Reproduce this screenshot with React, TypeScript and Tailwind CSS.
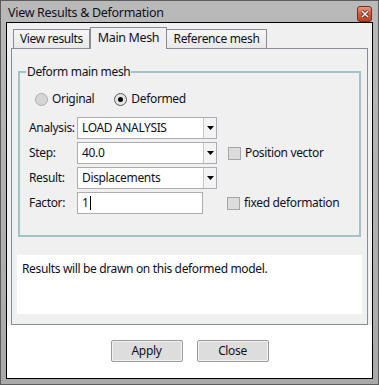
import React from "react";

function Radio({ checked, label }: { checked?: boolean; label: string }) {
  return (
    <label className="flex items-center gap-[4px]">
      <span
        className={`flex h-[13px] w-[13px] items-center justify-center rounded-full border ${
          checked
            ? "border-[#5a5a5a] bg-[#e4e4e4]"
            : "border-[#adadad] bg-[#d5d5d5]"
        }`}
      >
        {checked && <span className="h-[5px] w-[5px] rounded-full bg-black" />}
      </span>
      <span>{label}</span>
    </label>
  );
}

function Combo({ value }: { value: string }) {
  return (
    <div className="flex h-[22px] w-[140px] border border-[#abadb3] bg-white">
      <div className="flex flex-1 items-center pl-[4px]">{value}</div>
      <div className="flex w-[13px] items-center justify-center border-l border-[#c7c7c7] bg-[#f3f3f3]">
        <svg width="7" height="4" viewBox="0 0 7 4">
          <path d="M0 0h7L3.5 4z" fill="#000" />
        </svg>
      </div>
    </div>
  );
}

function Check({ label }: { label: string }) {
  return (
    <label className="flex items-center gap-[4px]">
      <span className="h-[13px] w-[13px] border border-[#a6a6a6] bg-[#dcdcdc]" />
      <span>{label}</span>
    </label>
  );
}

function Row({ label, children }: { label: string; children: React.ReactNode }) {
  return (
    <div className="flex h-[22px] items-center">
      <span className="w-[48px]">{label}</span>
      {children}
    </div>
  );
}

export default function App() {
  return (
    <div className="flex h-[385px] w-[379px] flex-col border border-[#5c5c5c] bg-gradient-to-b from-[#b9b9b9] to-[#a9a9a9] font-['Noto_Sans',sans-serif] text-[12px] tracking-[-0.35px] text-[#10101c]">
      {/* title bar */}
      <div className="flex h-[21px] items-center pl-[7px] pr-[5px] pt-[3px]">
        <span className="flex-1 text-[12.5px] tracking-[-0.3px]">View Results &amp; Deformation</span>
        <button className="mb-[-1px] mr-[1px] flex h-[16px] w-[15px] items-center justify-center rounded-[3px] border border-[#6b3326] bg-gradient-to-b from-[#e8957f] via-[#d45a3b] to-[#c2401f]">
          <svg width="8" height="8" viewBox="0 0 8 8">
            <path d="M1 1l6 6M7 1l-6 6" stroke="#3b2320" strokeWidth="3" />
            <path d="M1 1l6 6M7 1l-6 6" stroke="#fff" strokeWidth="1.5" />
          </svg>
        </button>
      </div>

      {/* client area */}
      <div className="mx-[5px] mb-[5px] flex flex-1 flex-col border border-black bg-white">
        <div className="flex flex-1 flex-col bg-[#f0f0f0] px-[4px] pt-[4px]">
          {/* tabs */}
          <div className="flex items-end pl-[2px]">
            <div className="flex h-[19px] w-[77px] items-center justify-center border border-b-0 border-[#898c95] bg-gradient-to-b from-[#f7f7f7] to-[#e8e8e8]">
              View results
            </div>
            <div className="relative z-10 -mb-px flex h-[22px] w-[77px] items-center justify-center border border-b-0 border-[#898c95] bg-[#f0f0f0] pb-[1px] text-[12.5px]">
              Main Mesh
            </div>
            <div className="flex h-[19px] w-[100px] items-center justify-center border border-b-0 border-l-0 border-[#898c95] bg-gradient-to-b from-[#f7f7f7] to-[#e8e8e8]">
              Reference mesh
            </div>
          </div>

          {/* pane */}
          <div className="flex h-[277px] flex-col border border-[#898c95] bg-[#f0f0f0] px-[6px]">
            <div className="relative mt-[22px] h-[166px] border-2 border-[#a2c3c6] px-[9px]">
              <span className="absolute -top-[10px] left-[6px] bg-[#f0f0f0] px-[1px]">
                Deform main mesh
              </span>
              <div className="flex gap-[20px] pl-[6px] pt-[17px]">
                <Radio label="Original" />
                <Radio checked label="Deformed" />
              </div>
              <div className="mt-[9px] flex flex-col gap-[3px]">
                <Row label="Analysis:">
                  <Combo value="LOAD ANALYSIS" />
                </Row>
                <Row label="Step:">
                  <Combo value="40.0" />
                  <div className="ml-[11px]">
                    <Check label="Position vector" />
                  </div>
                </Row>
                <Row label="Result:">
                  <Combo value="Displacements" />
                </Row>
                <Row label="Factor:">
                  <div className="flex h-[22px] w-[126px] items-center border border-[#abadb3] bg-white pl-[4px]">
                    1<span className="ml-px h-[14px] w-px bg-black" />
                  </div>
                  <div className="ml-[24px]">
                    <Check label="fixed deformation" />
                  </div>
                </Row>
              </div>
            </div>

            <div className="mx-[-1px] mt-[18px] h-[59px] bg-white px-[5px] pt-[5px]">
              Results will be drawn on this deformed model.
            </div>
          </div>

          {/* buttons */}
          <div className="-mx-[4px] flex flex-1 justify-center gap-[14px] bg-white pt-[15px]">
            <button className="h-[22px] w-[72px] rounded-[2px] border border-[#9a9a9a] bg-[#dddddd] shadow-[inset_0_0_0_1px_#f2f2f2]">
              Apply
            </button>
            <button className="h-[22px] w-[72px] rounded-[2px] border border-[#9a9a9a] bg-[#dddddd] shadow-[inset_0_0_0_1px_#f2f2f2]">
              Close
            </button>
          </div>
        </div>
      </div>
    </div>
  );
}
